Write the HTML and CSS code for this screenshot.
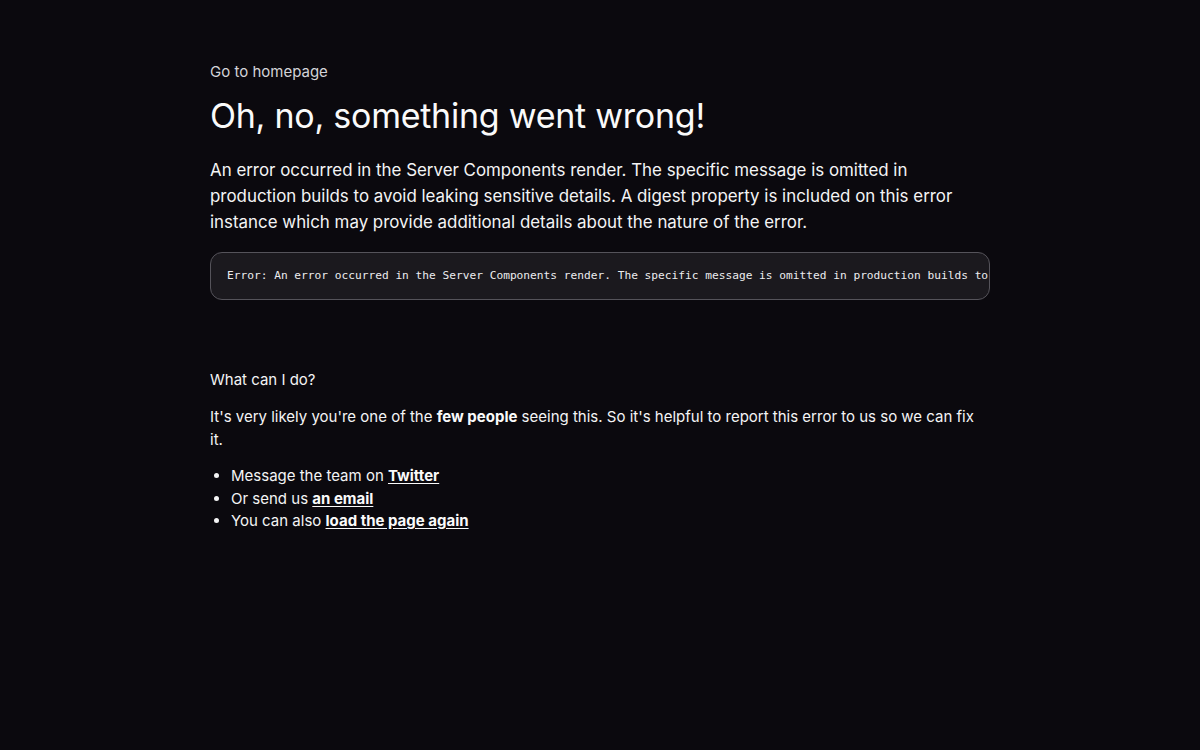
FILE: index.html
```html
<!DOCTYPE html>
<html lang="en">
<head>
<meta charset="utf-8">
<title>Error</title>
<link rel="stylesheet" href="styles.css">
</head>
<body>
<main class="page">
  <a class="home-link" href="#">Go to homepage</a>
  <h1 class="title">Oh, no, something went wrong!</h1>
  <p class="lead">An error occurred in the Server Components render. The specific message is omitted in production builds to avoid leaking sensitive details. A digest property is included on this error instance which may provide additional details about the nature of the error.</p>
  <pre class="code">Error: An error occurred in the Server Components render. The specific message is omitted in production builds to avoid leaking sensitive details. A digest property is included on this error instance which may provide additional details about the nature of the error.</pre>
  <section class="help">
    <h2 class="help-title">What can I do?</h2>
    <p class="help-text">It's very likely you're one of the <strong>few people</strong> seeing this. So it's helpful to report this error to us so we can fix it.</p>
    <ul class="help-list">
      <li>Message the team on <a href="#">Twitter</a></li>
      <li>Or send us <a href="#">an email</a></li>
      <li>You can also <a href="#">load the page again</a></li>
    </ul>
  </section>
</main>
</body>
</html>
```
FILE: styles.css
```css
* { box-sizing: border-box; }
html, body {
  margin: 0;
  padding: 0;
  background: #0b090e;
  color: #e4e4e7;
  font-family: Inter, "Noto Sans", sans-serif;
}
.page {
  width: 780px;
  margin: 0 auto;
  padding-top: 60px;
  display: flex;
  flex-direction: column;
}
.home-link {
  color: #d4d4d8;
  font-size: 15px;
  line-height: 24px;
  text-decoration: none;
  align-self: flex-start;
}
.title {
  margin: 12px 0 0;
  font-size: 34px;
  line-height: 40px;
  font-weight: 400;
  color: #fafafa;
  letter-spacing: -0.25px;
}
.lead {
  margin: 21px 0 0;
  font-size: 16.9px;
  line-height: 26px;
  color: #f4f4f5;
}
.code {
  margin: 17px 0 0;
  height: 48px;
  padding: 0 16px 2px;
  display: flex;
  align-items: center;
  background: #1b191e;
  border: 1px solid #55535a;
  border-radius: 12px;
  font-family: "DejaVu Sans Mono", "Liberation Mono", monospace;
  font-size: 11.2px;
  color: #ececef;
  white-space: pre;
  overflow: hidden;
}
.help {
  margin-top: 68px;
}
.help-title {
  margin: 0;
  font-size: 15px;
  line-height: 24px;
  font-weight: 400;
  color: #f4f4f5;
}
.help-text {
  margin: 13px 0 0;
  font-size: 15px;
  line-height: 23px;
  color: #f4f4f5;
}
.help-text strong { font-weight: 700; color: #fafafa; }
.help-list {
  margin: 14px 0 0;
  padding-left: 21px;
  font-size: 15px;
  line-height: 22.5px;
  color: #f4f4f5;
}
.help-list a {
  color: #fafafa;
  font-weight: 700;
  text-decoration: underline;
  text-underline-offset: 2px;
}
```
